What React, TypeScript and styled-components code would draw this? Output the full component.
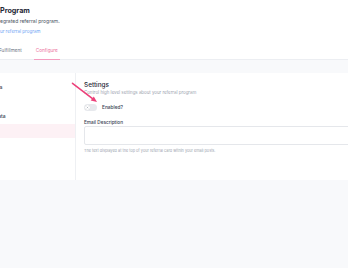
import styled, { createGlobalStyle } from "styled-components";

const GlobalStyle = createGlobalStyle`
  html, body {
    margin: 0;
    padding: 0;
    background: #f8f9fb;
  }
  body {
    font-family: Inter, "Noto Sans", sans-serif;
    color: #1f2937;
  }
`;

const Page = styled.div`
  position: relative;
  width: 348px;
  height: 268px;
  overflow: hidden;
  background: #f8f9fb;
`;

const Header = styled.header`
  background: #ffffff;
  border-bottom: 1px solid #eceef2;
  height: 60px;
  box-sizing: border-box;
  padding-top: 6px;
  display: flex;
  flex-direction: column;
`;

const Title = styled.h1`
  margin: 0;
  font-size: 7.2px;
  line-height: 10px;
  font-weight: 700;
  color: #1f2937;
`;

const Subtitle = styled.p`
  margin: 2px 0 0;
  font-size: 5px;
  line-height: 7px;
  color: #4b5563;
`;

const Link = styled.a`
  margin-top: 2.5px;
  font-size: 4.5px;
  line-height: 7px;
  color: #6ea4f4;
  text-decoration: none;
`;

const Tabs = styled.nav`
  display: flex;
  gap: 10px;
  margin-top: 10.5px;
  margin-left: -1px;
`;

const Tab = styled.span<{ $active?: boolean }>`
  padding: 0 2px 3.5px;
  font-size: 4.7px;
  line-height: 10px;
  color: ${(p) => (p.$active ? "#ec6f9b" : "#6b7280")};
  border-bottom: 1.5px solid ${(p) => (p.$active ? "#f39cbf" : "transparent")};
  &:first-child {
    padding-left: 0;
  }
`;

const Card = styled.section`
  margin-top: 13px;
  height: 107px;
  background: #ffffff;
  display: flex;
`;

const Sidebar = styled.aside`
  width: 76px;
  flex-shrink: 0;
  box-sizing: border-box;
  border-right: 1px solid #eef0f3;
  padding-top: 7px;
`;

const NavItem = styled.div<{ $active?: boolean }>`
  height: 14.5px;
  display: flex;
  align-items: center;
  text-indent: -17px;
  font-size: 5px;
  font-weight: 500;
  color: #374151;
  white-space: nowrap;
  background: ${(p) => (p.$active ? "#fdf1f5" : "transparent")};
`;

const Main = styled.div`
  flex: 1;
  padding: 8px 0 0 8px;
  display: flex;
  flex-direction: column;
  min-width: 0;
`;

const SectionTitle = styled.h2`
  margin: 0;
  font-size: 6.4px;
  line-height: 8px;
  font-weight: 500;
  color: #1f2937;
`;

const SectionText = styled.p`
  margin: 1px 0 0;
  font-size: 4.4px;
  line-height: 6px;
  color: #9ca3af;
  white-space: nowrap;
`;

const ToggleRow = styled.label`
  margin-top: 8px;
  display: flex;
  align-items: center;
  gap: 5px;
  height: 7px;
`;

const Track = styled.span`
  width: 13px;
  height: 7px;
  border-radius: 4px;
  background: #e7e9ed;
  display: flex;
  align-items: center;
  padding-left: 1px;
  box-sizing: border-box;
`;

const Knob = styled.span`
  width: 5px;
  height: 5px;
  border-radius: 50%;
  background: #ffffff;
  box-shadow: 0 0 0.5px rgba(0, 0, 0, 0.25);
  display: flex;
  align-items: center;
  justify-content: center;
`;

const ToggleLabel = styled.span`
  font-size: 4.8px;
  line-height: 7px;
  font-weight: 500;
  color: #374151;
`;

const FieldLabel = styled.div`
  margin-top: 8px;
  font-size: 4.7px;
  line-height: 6px;
  font-weight: 500;
  color: #374151;
`;

const Input = styled.div`
  margin-top: 1px;
  width: 300px;
  height: 19px;
  box-sizing: border-box;
  border: 1px solid #e5e7eb;
  border-radius: 2px;
  background: #ffffff;
`;

const Helper = styled.p`
  margin: 2.5px 0 0;
  font-size: 3.8px;
  line-height: 5px;
  color: #9ca3af;
  white-space: nowrap;
`;

const Arrow = styled.svg`
  position: absolute;
  left: 70px;
  top: 80px;
  width: 30px;
  height: 26px;
  overflow: visible;
`;

const App = () => {
  return (
    <Page>
      <GlobalStyle />
      <Header>
        <Title>Program</Title>
        <Subtitle>egrated referral program.</Subtitle>
        <Link href="#">ur referral program</Link>
        <Tabs>
          <Tab>Fulfillment</Tab>
          <Tab $active>Configure</Tab>
        </Tabs>
      </Header>
      <Card>
        <Sidebar>
          <NavItem>Settings</NavItem>
          <NavItem>Tiers</NavItem>
          <NavItem>Metadata</NavItem>
          <NavItem $active>Email</NavItem>
        </Sidebar>
        <Main>
          <SectionTitle>Settings</SectionTitle>
          <SectionText>Control high level settings about your referral program</SectionText>
          <ToggleRow>
            <Track>
              <Knob>
                <svg width="3" height="3" viewBox="0 0 4 4">
                  <path d="M1 1l2 2M3 1l-2 2" stroke="#9ca3af" strokeWidth="0.7" />
                </svg>
              </Knob>
            </Track>
            <ToggleLabel>Enabled?</ToggleLabel>
          </ToggleRow>
          <FieldLabel>Email Description</FieldLabel>
          <Input />
          <Helper>
            The text displayed at the top of your referral card within your email posts.
          </Helper>
        </Main>
      </Card>
      <Arrow viewBox="0 0 30 26">
        <line x1="2.5" y1="3.3" x2="22.5" y2="18.6" stroke="#ec407a" strokeWidth="1.6" strokeLinecap="round" />
        <polygon points="27,22 20.7,20.4 23.8,16.4" fill="#ec407a" />
      </Arrow>
    </Page>
  );
};

export default App;
